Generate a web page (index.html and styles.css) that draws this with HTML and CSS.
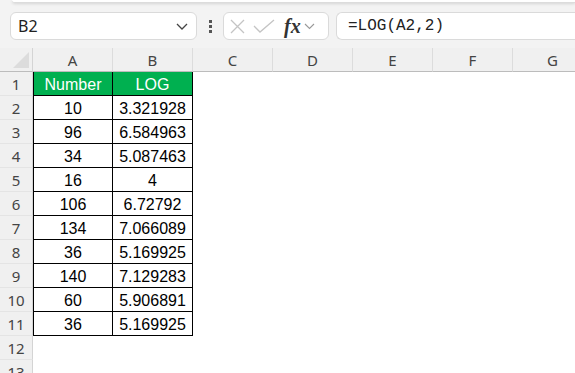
FILE: index.html
```html
<!DOCTYPE html>
<html lang="en">
<head>
    <meta charset="UTF-8">
    <title>LOG in Excel</title>
    <link rel="stylesheet" href="styles.css">
</head>
<body>
    <div class="ribbon"></div>

    <div class="formula-bar">
        <div class="name-box">
            <span>B2</span>
            <svg class="chev" width="12" height="7" viewBox="0 0 12 7"><path d="M1 1l5 5 5-5" fill="none" stroke="#444" stroke-width="1.3"/></svg>
        </div>
        <div class="dots"><i></i><i></i><i></i></div>
        <div class="fx-box">
            <svg width="18" height="16" viewBox="0 0 18 16"><path d="M2 2l13 13M15 2L2 15" stroke="#c4c4c4" stroke-width="1.3"/></svg>
            <svg width="22" height="16" viewBox="0 0 22 16"><path d="M1 8l6 6L21 2" fill="none" stroke="#c4c4c4" stroke-width="1.3"/></svg>
            <span class="fx">fx</span>
            <svg width="11" height="7" viewBox="0 0 11 7"><path d="M1 1l4.5 4.5L10 1" fill="none" stroke="#999" stroke-width="1.1"/></svg>
        </div>
        <div class="formula">=LOG(A2,2)</div>
    </div>

    <div class="sheet">
        <div class="corner"><span class="tri"></span></div>
        <div class="col-head">A</div>
        <div class="col-head">B</div>
        <div class="col-head">C</div>
        <div class="col-head">D</div>
        <div class="col-head">E</div>
        <div class="col-head">F</div>
        <div class="col-head">G</div>

        <div class="row-head">1</div>
        <div class="cell head first">Number</div>
        <div class="cell head">LOG</div>
        <div class="blank"></div><div class="blank"></div><div class="blank"></div><div class="blank"></div><div class="blank"></div>

        <div class="row-head">2</div>
        <div class="cell first">10</div><div class="cell">3.321928</div>
        <div class="blank"></div><div class="blank"></div><div class="blank"></div><div class="blank"></div><div class="blank"></div>

        <div class="row-head">3</div>
        <div class="cell first">96</div><div class="cell">6.584963</div>
        <div class="blank"></div><div class="blank"></div><div class="blank"></div><div class="blank"></div><div class="blank"></div>

        <div class="row-head">4</div>
        <div class="cell first">34</div><div class="cell">5.087463</div>
        <div class="blank"></div><div class="blank"></div><div class="blank"></div><div class="blank"></div><div class="blank"></div>

        <div class="row-head">5</div>
        <div class="cell first">16</div><div class="cell">4</div>
        <div class="blank"></div><div class="blank"></div><div class="blank"></div><div class="blank"></div><div class="blank"></div>

        <div class="row-head">6</div>
        <div class="cell first">106</div><div class="cell">6.72792</div>
        <div class="blank"></div><div class="blank"></div><div class="blank"></div><div class="blank"></div><div class="blank"></div>

        <div class="row-head">7</div>
        <div class="cell first">134</div><div class="cell">7.066089</div>
        <div class="blank"></div><div class="blank"></div><div class="blank"></div><div class="blank"></div><div class="blank"></div>

        <div class="row-head">8</div>
        <div class="cell first">36</div><div class="cell">5.169925</div>
        <div class="blank"></div><div class="blank"></div><div class="blank"></div><div class="blank"></div><div class="blank"></div>

        <div class="row-head">9</div>
        <div class="cell first">140</div><div class="cell">7.129283</div>
        <div class="blank"></div><div class="blank"></div><div class="blank"></div><div class="blank"></div><div class="blank"></div>

        <div class="row-head">10</div>
        <div class="cell first">60</div><div class="cell">5.906891</div>
        <div class="blank"></div><div class="blank"></div><div class="blank"></div><div class="blank"></div><div class="blank"></div>

        <div class="row-head">11</div>
        <div class="cell first">36</div><div class="cell">5.169925</div>
        <div class="blank"></div><div class="blank"></div><div class="blank"></div><div class="blank"></div><div class="blank"></div>

        <div class="row-head">12</div>
        <div class="blank"></div><div class="blank"></div><div class="blank"></div><div class="blank"></div><div class="blank"></div><div class="blank"></div><div class="blank"></div>

        <div class="row-head">13</div>
        <div class="blank"></div><div class="blank"></div><div class="blank"></div><div class="blank"></div><div class="blank"></div><div class="blank"></div><div class="blank"></div>
    </div>
</body>
</html>
```

FILE: styles.css
```css
/* Page */
body {
    margin: 0;
    background: #f3f3f3;
    font-family: 'Noto Sans', 'Open Sans', sans-serif;
    width: 575px;
    height: 373px;
    overflow: hidden;
}

.ribbon {
    height: 2px;
    margin-left: 12px;
    background: #fff;
    border-bottom: 1px solid #dcdcdc;
    border-bottom-left-radius: 6px;
    box-shadow: 0 1px 3px rgba(0, 0, 0, 0.12);
}

/* Formula bar */
.formula-bar {
    display: flex;
    align-items: center;
    height: 28px;
    margin-top: 9px;
    padding-left: 10px;
}

.name-box {
    width: 187px;
    height: 28px;
    box-sizing: border-box;
    background: #fff;
    border: 1px solid #dadada;
    border-radius: 6px;
    display: flex;
    align-items: center;
    justify-content: space-between;
    padding: 0 8px 0 7px;
    font-size: 16px;
    color: #222;
}

.dots {
    width: 3px;
    margin: 0 11px 0 12px;
    display: flex;
    flex-direction: column;
    gap: 2px;
}

.dots i {
    display: block;
    width: 3px;
    height: 3px;
    background: #555;
}

.fx-box {
    width: 106px;
    height: 28px;
    box-sizing: border-box;
    background: #fff;
    border: 1px solid #dadada;
    border-radius: 6px;
    display: flex;
    align-items: center;
    padding-left: 5px;
    gap: 6px;
}

.fx {
    font-family: 'Liberation Serif', serif;
    font-style: italic;
    font-weight: bold;
    font-size: 20px;
    color: #333;
    margin-left: 3px;
    margin-right: -3px;
    line-height: 1;
}

.formula {
    flex: 1;
    height: 28px;
    box-sizing: border-box;
    margin-left: 7px;
    background: #fff;
    border: 1px solid #dadada;
    border-right: none;
    border-radius: 6px 0 0 6px;
    font-family: 'Liberation Mono', monospace;
    font-size: 16px;
    color: #222;
    padding-left: 11px;
    line-height: 26px;
}

/* Grid */
.sheet {
    margin-top: 8px;
    display: grid;
    grid-template-columns: 33px repeat(7, 80px);
    grid-auto-rows: 24px;
    background: #fff;
}

.corner {
    background: #f0f0f0;
    border-right: 1px solid #d4d4d4;
    border-bottom: 1px solid #bcbcbc;
    display: flex;
    align-items: flex-end;
    justify-content: flex-end;
    padding: 0 3px 3px 0;
}

.tri {
    width: 0;
    height: 0;
    border-left: 16px solid transparent;
    border-bottom: 16px solid #dcdcdc;
}

.col-head {
    background: #f0f0f0;
    border-right: 1px solid #dcdcdc;
    border-bottom: 1px solid #bcbcbc;
    text-align: center;
    font-size: 15px;
    line-height: 24px;
    color: #444;
}

.row-head {
    background: #f0f0f0;
    border-right: 1px solid #d4d4d4;
    border-bottom: 1px solid #e4e4e4;
    text-align: center;
    font-size: 15px;
    line-height: 24px;
    color: #444;
}

.sheet > div {
    box-sizing: border-box;
}

.cell {
    border-right: 1px solid #000;
    border-bottom: 1px solid #000;
    text-align: center;
    font-family: 'Liberation Sans', Arial, sans-serif;
    font-size: 16px;
    line-height: 24px;
    padding-top: 1px;
    color: #000;
}

.cell.first {
    border-left: 1px solid #000;
}

.cell.head {
    background: #00b050;
    color: #fff;
}
```
